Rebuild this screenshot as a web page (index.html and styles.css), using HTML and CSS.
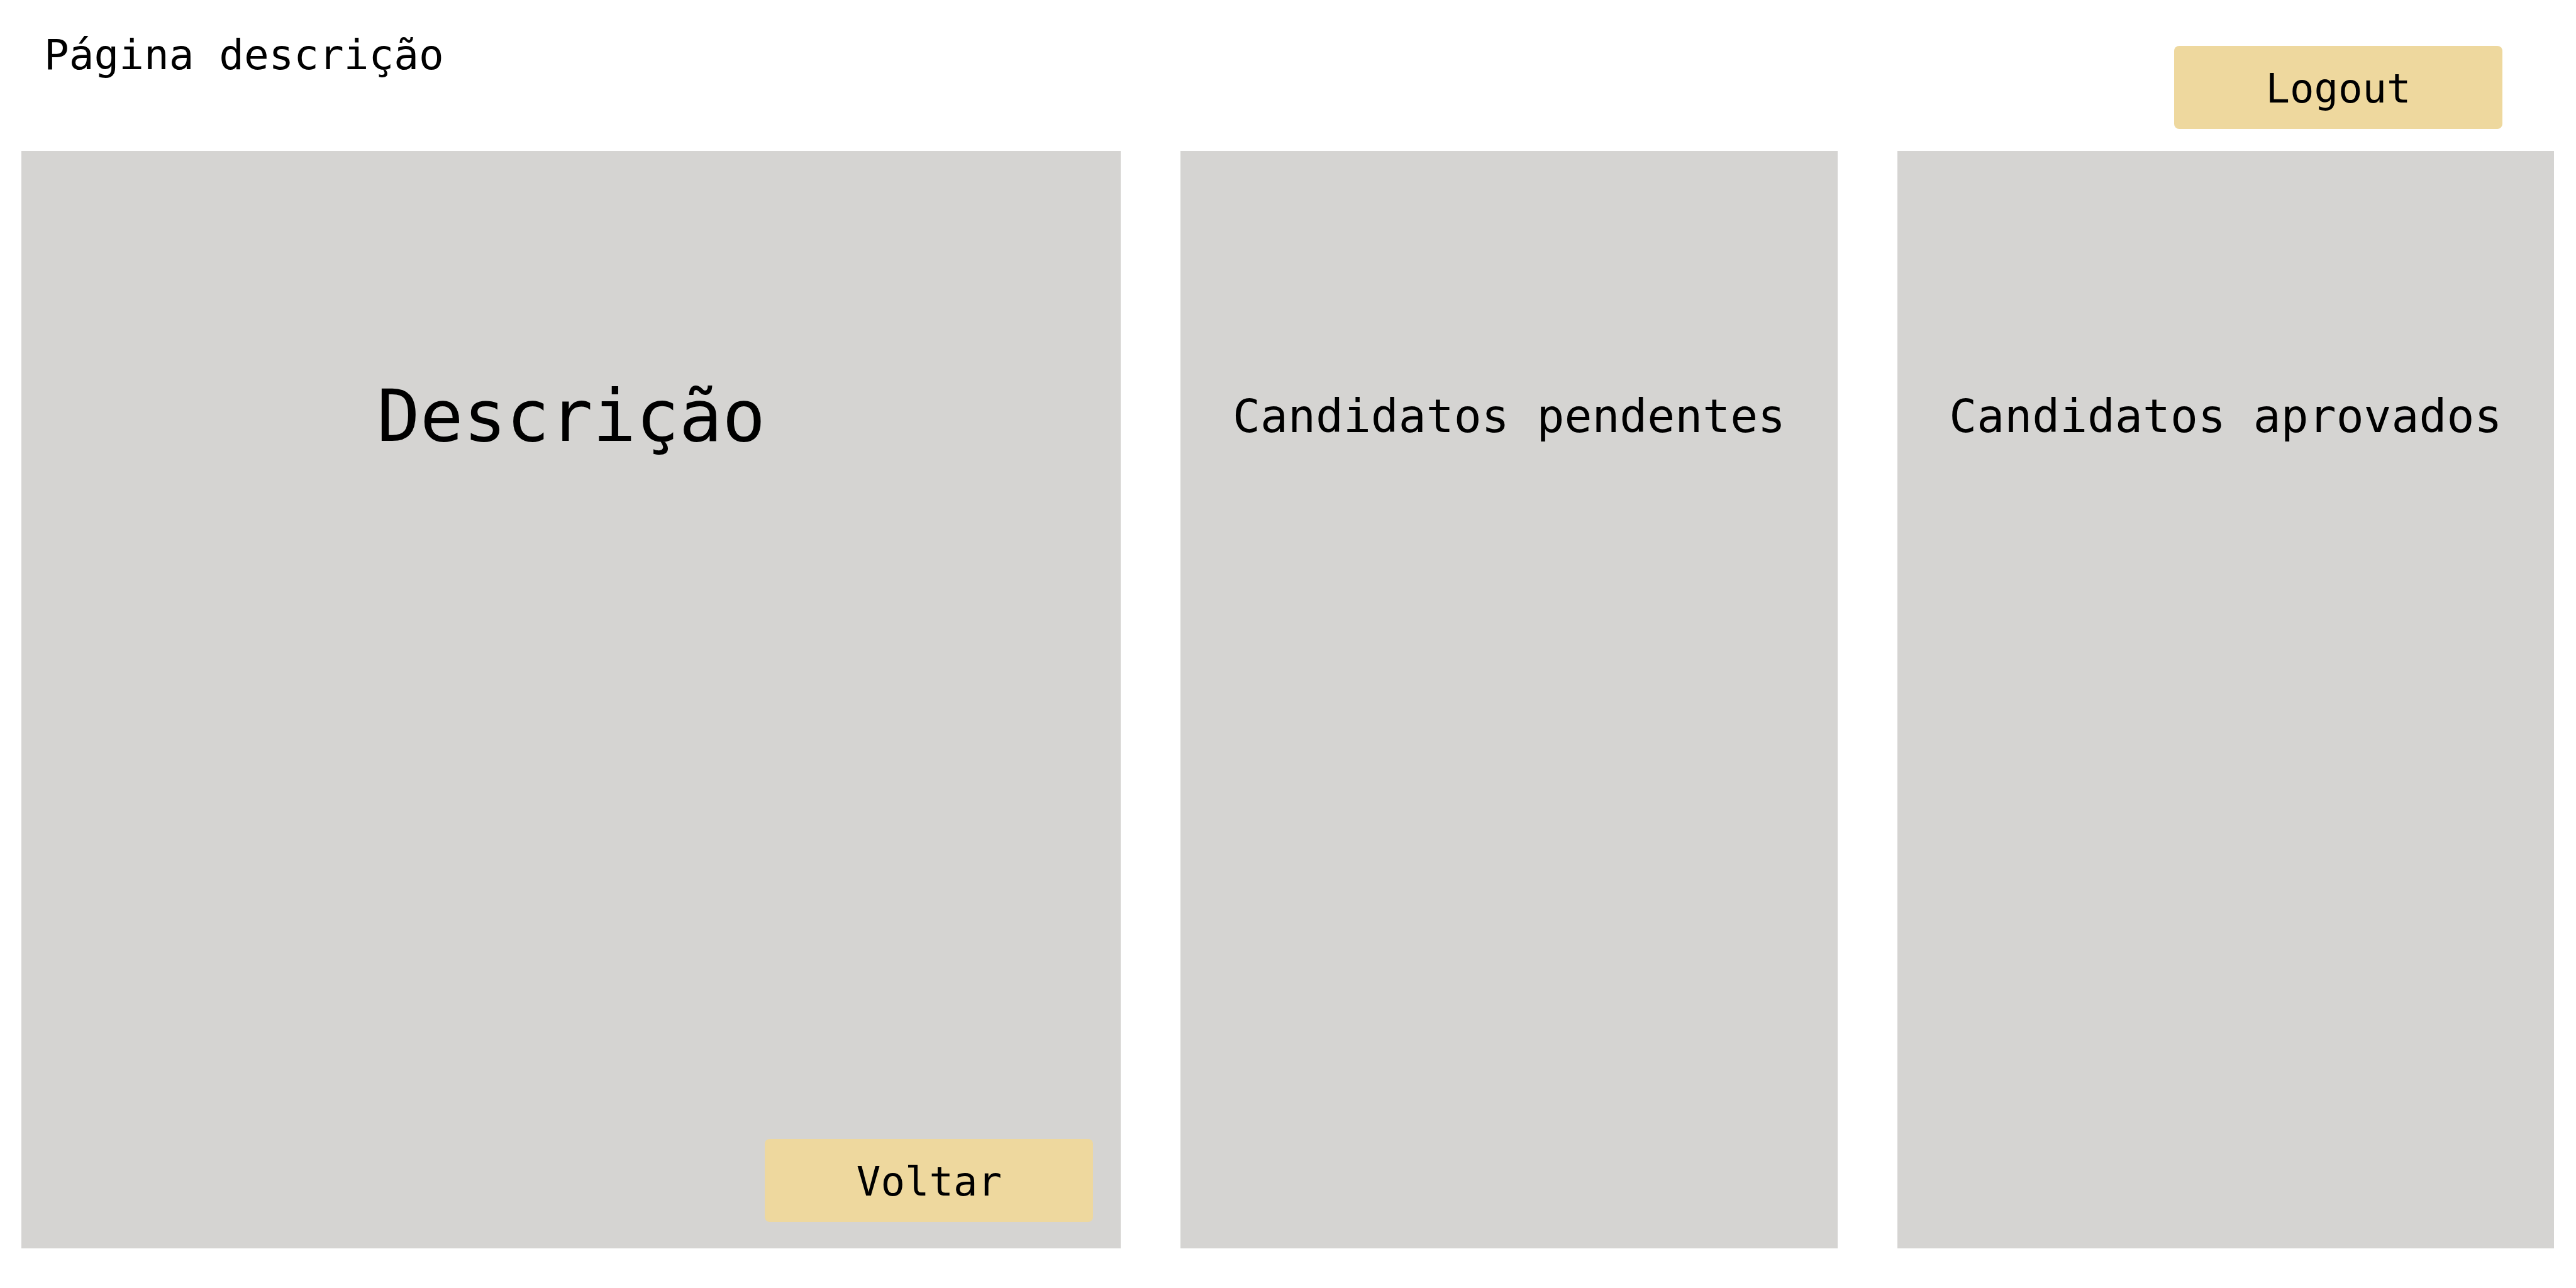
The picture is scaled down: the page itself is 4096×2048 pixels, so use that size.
FILE: index.html
```html
<!DOCTYPE html>
<html lang="pt-BR">
<head>
  <meta charset="utf-8">
  <meta name="viewport" content="width=device-width, initial-scale=1">
  <title>Página descrição</title>
  <link rel="stylesheet" href="styles.css">
</head>
<body class="page">
  <header class="topbar">
    <h1 class="page-title">Página descrição</h1>
    <button class="button topbar-action" type="button">Logout</button>
  </header>
  <main class="panels">
    <section class="panel">
      <h2 class="heading heading-large">Descrição</h2>
      <button class="button panel-action" type="button">Voltar</button>
    </section>
    <section class="panel">
      <h2 class="heading">Candidatos pendentes</h2>
    </section>
    <section class="panel">
      <h2 class="heading">Candidatos aprovados</h2>
    </section>
  </main>
</body>
</html>
```
FILE: styles.css
```css
* {
  box-sizing: border-box;
}

.page {
  display: flex;
  flex-direction: column;
  min-height: 100vh;
  margin: 0;
  padding: 0 35px 63px 34px;
  background: #fff;
  color: #000;
  font-family: "DejaVu Sans Mono", monospace;
}

.topbar {
  display: flex;
  justify-content: space-between;
  align-items: flex-start;
  padding: 48px 82px 35px 36px;
}

.page-title {
  margin: 0;
  font-size: 66px;
  font-weight: 400;
  line-height: 80px;
}

.button {
  width: 522px;
  padding: 28px 0 24px;
  border: 0;
  border-radius: 8px;
  background: #eed89e;
  color: inherit;
  font: inherit;
  font-size: 64px;
  line-height: 80px;
  text-align: center;
  cursor: pointer;
}

.topbar-action {
  margin-top: 25px;
}

.panels {
  display: grid;
  flex: 1;
  grid-template-columns: 1748fr 1044fr 1044fr;
  gap: 95px;
}

.panel {
  display: flex;
  flex-direction: column;
  align-items: center;
  padding: 352px 44px 42px;
  background: #d5d4d2;
}

.heading {
  margin: 0;
  font-size: 73px;
  font-weight: 400;
  line-height: 140px;
  white-space: nowrap;
}

.heading-large {
  font-size: 114px;
}

.panel-action {
  margin-top: auto;
  align-self: flex-end;
}
```
